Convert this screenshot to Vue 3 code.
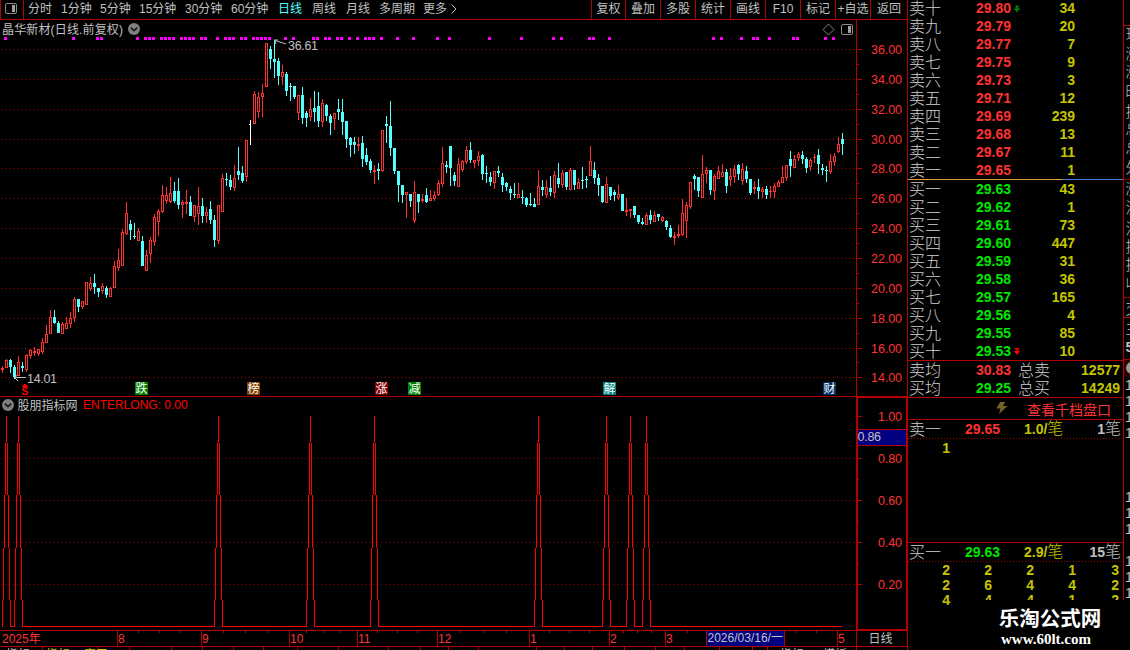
<template>
  <div class="terminal">
    <div class="main">
      <div class="toolbar">
        <div class="layout-btn">
          <svg width="14" height="13" viewBox="0 0 14 13">
            <rect x="1.5" y="1.5" width="11" height="10" rx="1.5" fill="none" stroke="#8c8c8c" />
            <rect x="8" y="3" width="3" height="7" fill="#a0a0a0" />
          </svg>
        </div>
        <div class="periods">
          <span v-for="p in periods" :key="p" :class="{ active: p === '日线' }">{{ p }}</span>
          <span class="more">更多<svg width="6" height="10" viewBox="0 0 6 10"><path d="M0.5 0.5L5 5L0.5 9.5" fill="none" stroke="#c0c0c0" /></svg></span>
        </div>
        <div class="tools">
          <span v-for="b in tools" :key="b">{{ b }}</span>
        </div>
      </div>

      <!-- K线主图 -->
      <svg class="panel" width="908" height="376" viewBox="0 20 908 376" shape-rendering="crispEdges">
        <path :d="gridPath(priceGrid)" class="dots" />
        <rect v-for="x in signals" :key="'m' + x" :x="x" y="37" width="3" height="3" fill="#ff00ff" />
        <g v-for="(c, i) in candles" :key="i" :fill="colors[c[0]]">
          <rect :x="2 + i * 4" :y="c[1]" width="1" :height="c[4] - c[1]" />
          <rect :x="1 + i * 4" :y="c[2]" :width="c[0] === 'w' ? 2 : 3" :height="c[3] - c[2]" />
          <rect v-if="c[0] === 'r' && c[3] - c[2] > 2" :x="2 + i * 4" :y="c[2] + 1" width="1" :height="c[3] - c[2] - 2" fill="#000" />
        </g>
        <rect x="856" y="20" width="1" height="376" class="frame" />
        <rect x="907" y="20" width="1" height="376" class="frame" />
        <g v-for="(y, i) in priceGrid" :key="y">
          <rect x="857" :y="y" width="5" height="1" class="frame" />
          <rect v-if="i < 11" x="857" :y="y + 15 - (i === 3 || i === 10 ? 1 : 0)" width="2" height="1" class="frame" />
          <text x="871" :y="y + 5" class="axis" textLength="31">{{ 36 - i * 2 }}.00</text>
        </g>
        <text x="2" y="34" class="label" textLength="121">晶华新材(日线.前复权)</text>
        <g shape-rendering="auto">
          <circle cx="134" cy="29" r="6" fill="#808080" />
          <path d="M130.8 27.7L134 30.7L137.2 27.7" fill="none" stroke="#141414" stroke-width="1.6" />
          <path d="M828.5 24L834 29.5L828.5 35L823 29.5Z" fill="none" stroke="#858585" />
          <rect x="841.5" y="24.5" width="11" height="10" rx="1.5" fill="none" stroke="#8c8c8c" />
          <rect x="848" y="26" width="3" height="7" fill="#a0a0a0" />
          <path d="M286 44L275 40.5M274 40H278M275 41L276 44" fill="none" stroke="#c0c0c0" />
          <path d="M26 377.5H14.5L18 381M14.5 377.5L17 375.5" fill="none" stroke="#c0c0c0" />
        </g>
        <text x="288" y="50" class="label num" textLength="30">36.61</text>
        <text x="27" y="383" class="label num" textLength="30">14.01</text>
        <path d="M25 384L28.5 387H21.5Z" fill="#ff0000" />
        <text x="21.5" y="395" class="mark">S</text>
        <g v-for="b in badges" :key="b.x">
          <path :d="`M${b.x} 382h12l1 1v12h-13z`" :fill="b.color" />
          <text :x="b.x + 0.5" y="393" class="badge">{{ b.text }}</text>
        </g>
      </svg>

      <!-- 副图指标 -->
      <svg class="panel" width="908" height="234" viewBox="0 396 908 234" shape-rendering="crispEdges">
        <rect x="0" y="396" width="908" height="1" class="frame" />
        <path :d="gridPath(subGrid)" class="dots" />
        <path :d="spikePath" fill="#ff0000" />
        <rect x="857" y="397" width="50" height="233" fill="none" stroke="#b40000" stroke-width="2" />
        <rect x="858" y="416" width="4" height="1" class="frame" />
        <g v-for="(y, i) in subGrid" :key="y">
          <rect x="858" :y="y" width="4" height="1" class="frame" />
          <rect v-if="i < 3" x="858" :y="y + 21" width="1" height="1" class="frame" />
        </g>
        <text v-for="(v, i) in ['1.00', '0.80', '0.60', '0.40', '0.20']" :key="v" x="878" :y="421 + i * 42" class="axis" textLength="24">{{ v }}</text>
        <rect x="858" y="429" width="48" height="17" class="frame" />
        <rect x="858" y="430" width="48" height="15" fill="#000080" />
        <text x="857.5" y="441" class="label num" textLength="23.5">0.86</text>
        <g shape-rendering="auto">
          <circle cx="8" cy="405" r="6" fill="#808080" />
          <path d="M4.8 403.7L8 406.7L11.2 403.7" fill="none" stroke="#141414" stroke-width="1.6" />
        </g>
        <text x="17.5" y="410" class="label">股朋指标网</text>
        <text x="83" y="409" class="enter">ENTERLONG: 0.00</text>
      </svg>

      <!-- 时间轴 -->
      <svg class="panel" width="908" height="20" viewBox="0 630 908 20" shape-rendering="crispEdges">
        <rect x="0" y="630" width="908" height="1" class="frame" />
        <rect x="0" y="646" width="908" height="1" class="frame" />
        <rect v-for="x in minorTicks" :key="'s' + x" :x="x" y="631" width="1" height="2" class="frame" />
        <rect v-for="x in majorTicks" :key="'l' + x" :x="x" y="631" width="1" height="15" class="frame" />
        <rect v-for="x in tabTicks" :key="'t' + x" :x="x" y="647" width="1" height="3" class="frame" />
        <rect x="907" y="630" width="1" height="20" class="frame" />
        <rect x="707" y="631" width="77" height="15" fill="#000080" />
        <text v-for="m in months" :key="m[0]" :x="m[0]" y="643" class="axis month">{{ m[1] }}</text>
        <text x="707.5" y="642" class="label date">2026/03/16/一</text>
        <text x="868.5" y="643" class="label">日线</text>
        <text x="6" y="659" class="label tab">指标</text>
        <text x="46" y="659" class="tab yellow">指标</text>
        <text x="84" y="659" class="tab yellow">窗口</text>
        <text x="780" y="659" class="label tab">指标</text>
        <text x="823" y="659" class="label tab">模板</text>
      </svg>
    </div>

    <div class="quote">
      <div class="book sell">
        <div v-for="r in asks" :key="r[0]" class="row">
          <span class="name">{{ r[0] }}</span>
          <span class="price up">{{ r[1] }}</span>
          <svg class="flag" width="6" height="7" viewBox="0 0 6 7"><path v-if="r[0] === '卖十'" d="M3 0L5.5 2.5H3.6V3.5H5.8V5H3.8V7H2.2V5H.2V3.5H2.4V2.5H.5Z" fill="#008c00" /></svg>
          <span class="vol">{{ r[2] }}</span>
        </div>
      </div>
      <div class="split"></div>
      <div class="book buy">
        <div v-for="r in bids" :key="r[0]" class="row">
          <span class="name">{{ r[0] }}</span>
          <span class="price down">{{ r[1] }}</span>
          <svg class="flag" width="6" height="7" viewBox="0 0 6 7"><path v-if="r[0] === '买十'" d="M.5 0H5.5V1.2H3.6V2.5H5.5V3.7L3 7L.5 3.7V2.5H2.4V1.2H.5Z" fill="#ff0000" /></svg>
          <span class="vol">{{ r[2] }}</span>
        </div>
      </div>
      <div class="sums">
        <div class="row">
          <span class="name">卖均</span><span class="price up">30.83</span><span class="name">总卖</span><span class="vol">12577</span>
        </div>
        <div class="row">
          <span class="name">买均</span><span class="price down">29.25</span><span class="name">总买</span><span class="vol">14249</span>
        </div>
      </div>
      <div class="depth-link">
        <svg width="12" height="12" viewBox="0 0 12 12"><path d="M4 0H9L7 4H11.5L3 12L4.5 6.5H0.5Z" fill="#74642a" /></svg>
        <span>查看千档盘口</span>
      </div>
      <div class="queue first">
        <div class="head">
          <span class="name">卖一</span><span class="price up">29.65</span><span class="avg">1.0/<i>笔</i></span><span class="count">1<i>笔</i></span>
        </div>
        <div class="orders"><span>1</span></div>
      </div>
      <div class="queue">
        <div class="head">
          <span class="name">买一</span><span class="price down">29.63</span><span class="avg">2.9/<i>笔</i></span><span class="count">15<i>笔</i></span>
        </div>
        <div class="orders">
          <span v-for="(n, i) in orders" :key="i">{{ n }}</span>
        </div>
      </div>
    </div>

    <svg class="side" width="7" height="600" viewBox="1123 0 7 600" shape-rendering="crispEdges">
      <rect x="1123" y="0" width="1" height="600" class="frame" />
      <rect v-for="y in [25, 179, 297, 317, 359]" :key="y" x="1124" :y="y" width="6" height="1" class="frame" />
      <rect x="1124" y="360" width="6" height="17" fill="#300000" />
      <circle cx="1132" cy="368" r="6" fill="#999" shape-rendering="auto" />
      <text v-for="s in sideText" :key="s[0]" x="1125.5" :y="s[0]" class="side-text">{{ s[1] }}</text>
      <text x="1125.5" y="352" class="side-bold">5</text>
      <text v-for="y in sideOnes" :key="'o' + y" x="1125" :y="y" class="side-num">1</text>
    </svg>

    <div class="watermark">
      <div class="site">乐淘公式网</div>
      <div class="url">www.60lt.com</div>
    </div>
  </div>
</template>

<script setup>
const periods = ['分时', '1分钟', '5分钟', '15分钟', '30分钟', '60分钟', '日线', '周线', '月线', '多周期']
const tools = ['复权', '叠加', '多股', '统计', '画线', 'F10', '标记', '+自选', '返回']

const colors = { r: '#ff3232', c: '#54ffff', w: '#ffffff' }

// [类型, 上影, 实体顶, 实体底, 下影]
const candles = [
  ['r', 366, 368, 370, 373], ['r', 359, 360, 368, 368], ['c', 359, 360, 367, 373], ['c', 365, 367, 377, 379],
  ['r', 356, 362, 376, 376], ['c', 362, 366, 368, 372], ['r', 354, 355, 370, 372], ['r', 349, 350, 356, 359],
  ['r', 347, 351, 353, 356], ['r', 349, 349, 354, 356], ['r', 338, 342, 352, 354], ['r', 325, 334, 343, 343],
  ['r', 310, 317, 334, 334], ['c', 310, 317, 323, 324], ['c', 321, 323, 333, 333], ['r', 322, 324, 334, 334],
  ['r', 317, 323, 329, 329], ['r', 312, 318, 324, 328], ['r', 297, 299, 318, 322], ['c', 299, 299, 307, 312],
  ['r', 301, 301, 307, 309], ['r', 282, 282, 305, 305], ['r', 277, 283, 289, 291], ['c', 274, 283, 287, 294],
  ['c', 288, 288, 292, 297], ['r', 283, 286, 291, 294], ['c', 286, 288, 295, 298], ['r', 287, 288, 297, 297],
  ['r', 261, 266, 288, 288], ['r', 249, 260, 268, 271], ['r', 229, 232, 266, 266], ['r', 202, 213, 234, 235],
  ['c', 220, 224, 230, 240], ['c', 223, 236, 237, 239], ['r', 228, 231, 241, 241], ['c', 236, 241, 266, 266],
  ['r', 250, 255, 271, 271], ['r', 237, 240, 254, 263], ['r', 214, 217, 242, 246], ['r', 209, 211, 222, 236],
  ['r', 185, 195, 212, 213], ['r', 187, 195, 201, 204], ['r', 177, 193, 202, 203], ['c', 182, 191, 201, 203],
  ['c', 178, 191, 205, 209], ['r', 200, 202, 205, 218], ['r', 190, 202, 204, 214], ['c', 196, 202, 216, 216],
  ['r', 205, 205, 217, 222], ['r', 187, 206, 214, 225], ['c', 198, 206, 216, 223], ['r', 207, 212, 216, 223],
  ['c', 201, 209, 220, 224], ['c', 215, 220, 240, 247], ['r', 205, 205, 241, 244], ['r', 174, 178, 212, 212],
  ['c', 173, 179, 180, 186], ['c', 175, 180, 187, 190], ['r', 165, 178, 188, 191], ['c', 147, 171, 175, 180],
  ['c', 166, 173, 181, 183], ['r', 140, 140, 177, 182], ['w', 120, 124, 125, 145], ['r', 91, 94, 124, 124],
  ['r', 92, 97, 112, 118], ['r', 84, 93, 97, 117], ['r', 43, 43, 87, 87], ['c', 46, 49, 59, 69],
  ['c', 40, 59, 62, 78], ['c', 58, 61, 76, 85], ['r', 65, 72, 77, 85], ['c', 72, 74, 91, 96],
  ['c', 83, 86, 87, 101], ['c', 86, 86, 97, 99], ['r', 95, 95, 113, 120], ['c', 87, 95, 118, 124],
  ['c', 111, 113, 118, 127], ['r', 98, 109, 117, 121], ['c', 91, 108, 112, 122], ['c', 92, 106, 121, 127],
  ['r', 99, 103, 122, 127], ['c', 104, 105, 116, 121], ['c', 114, 116, 123, 135], ['r', 113, 113, 119, 130],
  ['c', 99, 109, 112, 120], ['c', 99, 112, 122, 135], ['c', 121, 121, 139, 148], ['c', 137, 138, 145, 157],
  ['c', 137, 142, 145, 154], ['r', 137, 144, 146, 151], ['c', 136, 143, 159, 167], ['c', 148, 155, 162, 165],
  ['c', 159, 161, 170, 173], ['r', 165, 170, 172, 184], ['c', 163, 169, 171, 180], ['r', 130, 130, 171, 172],
  ['c', 116, 124, 126, 143], ['c', 101, 126, 148, 156], ['c', 148, 148, 171, 174], ['c', 171, 171, 185, 202],
  ['c', 185, 185, 195, 203], ['r', 192, 192, 195, 218], ['c', 194, 194, 201, 207], ['r', 181, 192, 221, 223],
  ['c', 194, 194, 202, 213], ['r', 194, 199, 201, 203], ['c', 188, 195, 202, 203], ['r', 190, 198, 201, 201],
  ['r', 191, 195, 199, 201], ['r', 180, 183, 195, 196], ['r', 147, 163, 184, 187], ['c', 161, 165, 167, 173],
  ['c', 146, 146, 168, 186], ['c', 172, 175, 181, 186], ['r', 158, 164, 187, 187], ['r', 160, 161, 170, 172],
  ['r', 146, 150, 162, 164], ['c', 142, 150, 160, 163], ['r', 160, 160, 163, 168], ['r', 151, 156, 161, 166],
  ['c', 154, 155, 174, 180], ['c', 166, 173, 174, 183], ['c', 172, 177, 182, 186], ['r', 171, 171, 183, 189],
  ['c', 166, 171, 173, 177], ['c', 173, 177, 185, 192], ['c', 182, 183, 187, 191], ['c', 186, 189, 193, 200],
  ['c', 183, 194, 195, 198], ['r', 183, 194, 198, 198], ['c', 190, 197, 198, 204], ['c', 197, 198, 205, 207],
  ['c', 193, 204, 205, 206], ['c', 198, 204, 207, 207], ['r', 170, 186, 205, 205], ['c', 180, 187, 190, 196],
  ['r', 180, 187, 195, 198], ['c', 176, 188, 192, 196], ['r', 171, 175, 193, 198], ['c', 163, 178, 184, 188],
  ['r', 170, 173, 185, 188], ['c', 172, 172, 187, 190], ['r', 168, 170, 190, 190], ['c', 170, 170, 185, 190],
  ['r', 178, 182, 189, 189], ['c', 167, 180, 181, 189], ['c', 176, 179, 180, 188], ['r', 146, 161, 176, 176],
  ['c', 162, 170, 178, 184], ['c', 174, 178, 185, 196], ['c', 186, 186, 202, 203], ['r', 177, 184, 203, 203],
  ['c', 187, 187, 196, 200], ['c', 190, 192, 195, 201], ['r', 185, 194, 198, 200], ['c', 194, 194, 211, 211],
  ['r', 198, 210, 212, 216], ['r', 209, 209, 211, 218], ['c', 206, 206, 215, 218], ['c', 215, 215, 222, 224],
  ['c', 218, 222, 224, 225], ['r', 213, 215, 225, 225], ['c', 210, 215, 220, 224], ['r', 211, 215, 222, 222],
  ['c', 214, 214, 217, 221], ['r', 216, 217, 221, 222], ['c', 220, 221, 227, 230], ['c', 225, 228, 237, 238],
  ['r', 232, 236, 238, 245], ['r', 225, 234, 236, 238], ['r', 199, 213, 235, 236], ['r', 202, 205, 221, 238],
  ['r', 182, 182, 207, 209], ['c', 174, 176, 179, 190], ['c', 177, 177, 191, 197], ['r', 155, 174, 198, 198],
  ['r', 167, 170, 174, 183], ['c', 170, 170, 190, 195], ['r', 174, 176, 191, 200], ['r', 166, 171, 179, 179],
  ['r', 164, 172, 177, 177], ['c', 169, 172, 186, 193], ['r', 168, 176, 180, 186], ['r', 165, 169, 177, 183],
  ['c', 164, 165, 174, 180], ['r', 163, 169, 181, 185], ['c', 166, 171, 179, 183], ['c', 179, 179, 193, 195],
  ['r', 181, 187, 189, 194], ['c', 179, 187, 191, 199], ['r', 187, 189, 192, 198], ['c', 186, 189, 195, 199],
  ['r', 186, 191, 192, 198], ['r', 183, 186, 192, 198], ['r', 180, 182, 187, 187], ['r', 166, 177, 183, 183],
  ['r', 165, 165, 178, 181], ['c', 151, 159, 166, 177], ['r', 155, 159, 168, 168], ['r', 152, 154, 158, 161],
  ['c', 151, 155, 159, 164], ['c', 157, 159, 168, 173], ['r', 158, 160, 167, 171], ['r', 154, 157, 158, 163],
  ['c', 149, 155, 164, 174], ['c', 164, 168, 170, 175], ['c', 166, 170, 171, 182], ['r', 154, 161, 172, 174],
  ['r', 153, 156, 162, 166], ['r', 137, 144, 152, 153], ['c', 133, 139, 144, 155]
]

const signals = [
  4, 72, 96, 100, 136, 144, 148, 152, 160, 164, 168, 172, 180, 184, 188, 192, 200, 204, 216, 224, 228, 232,
  240, 244, 252, 256, 260, 264, 268, 284, 292, 312, 316, 324, 328, 336, 340, 348, 356, 364, 368, 372, 380,
  396, 412, 436, 448, 488, 520, 552, 560, 588, 592, 608, 712, 720, 740, 752, 756, 768, 792, 796, 824, 832
]

const priceGrid = [49, 79, 109, 139, 168, 198, 228, 258, 288, 318, 348, 377]
const subGrid = [458, 500, 542, 584]

const gridPath = (rows) => rows.map((y) => `M1 ${y + 0.5}H856`).join('')

const badges = [
  { x: 135, text: '跌', color: '#008000' },
  { x: 247, text: '榜', color: '#804000' },
  { x: 375, text: '涨', color: '#800000' },
  { x: 408, text: '减', color: '#008000' },
  { x: 603, text: '解', color: '#008080' },
  { x: 823, text: '财', color: '#003366' }
]

const spikes = [6, 18, 218, 310, 374, 538, 606, 630, 646]
const steps = [416, 443, 495, 548, 600, 627]

const buildSpikes = () => {
  let d = ''
  spikes.forEach((c, n) => {
    for (let k = 0; k < 5; k++) {
      const h = steps[k + 1] - steps[k]
      d += `M${c - k} ${steps[k]}h1v${h}h-1z`
      if (k) d += `M${c + k} ${steps[k]}h1v${h}h-1z`
    }
    const end = n < spikes.length - 1 ? spikes[n + 1] - 4 : 842
    d += `M${c + 5} 626H${end}v1H${c + 5}z`
  })
  return d
}
const spikePath = buildSpikes()

const majorTicks = [117, 201, 289, 357, 437, 529, 609, 665, 706, 784, 837, 856]
const minorTicks = [138, 159, 180, 223, 245, 267, 306, 323, 340, 377, 397, 417, 460, 483, 506, 549, 569, 589, 623, 637, 651, 687, 795, 816]
const tabTicks = [42, 97, 129, 171, 202, 233, 263, 297, 338, 388, 420, 448, 478, 536, 564, 592, 624, 655, 684, 719, 752, 767, 856]
const months = [
  [2, '2025年'], [118, '8'], [202, '9'], [290, '10'], [358, '11'], [438, '12'],
  [530, '1'], [610, '2'], [666, '3'], [838, '5']
]

const asks = [
  ['卖十', '29.80', 34], ['卖九', '29.79', 20], ['卖八', '29.77', 7], ['卖七', '29.75', 9], ['卖六', '29.73', 3],
  ['卖五', '29.71', 12], ['卖四', '29.69', 239], ['卖三', '29.68', 13], ['卖二', '29.67', 11], ['卖一', '29.65', 1]
]
const bids = [
  ['买一', '29.63', 43], ['买二', '29.62', 1], ['买三', '29.61', 73], ['买四', '29.60', 447], ['买五', '29.59', 31],
  ['买六', '29.58', 36], ['买七', '29.57', 165], ['买八', '29.56', 4], ['买九', '29.55', 85], ['买十', '29.53', 10]
]
const orders = [2, 2, 2, 1, 3, 2, 6, 4, 4, 2, 4, 4, 4, 1, 2]

const sideText = [
  [40, '现'], [59, '涨'], [77, '涨'], [97, '昨'], [117, '换'], [134, '总'], [153, '总'], [173, '外'],
  [194, '涨'], [213, '流'], [234, '流'], [252, '换'], [270, '换'], [289, '收'], [314, '交'], [334, '主']
]
const sideOnes = [390, 406, 422, 438, 502, 518, 534, 566, 582, 598]
</script>

<style>
html,
body {
  background: #000;
  overflow: hidden;
}
</style>

<style scoped>
.terminal {
  position: relative;
  display: grid;
  grid-template-columns: 908px 215px 7px;
  width: 1130px;
  height: 650px;
  overflow: hidden;
  background: #000;
  color: #c0c0c0;
  font-family: "Liberation Sans", "Noto Sans CJK SC", sans-serif;
  font-size: 12px;
}

.main {
  display: flex;
  flex-direction: column;
}

.panel {
  display: block;
  flex: none;
}

.toolbar {
  display: flex;
  height: 20px;
  box-sizing: border-box;
  border-bottom: 1px solid #b40000;
  border-right: 1px solid #b40000;
  line-height: 19px;
  white-space: nowrap;
}

.layout-btn {
  width: 24px;
  box-sizing: border-box;
  border: solid #b40000;
  border-width: 0 1px;
  padding: 2px 0 0 3px;
}

.layout-btn svg {
  display: block;
}

.periods {
  display: grid;
  grid-template-columns: 33px 39px 39px 46px 46px 47px 34px 34px 33px 44px 1fr;
  width: 567px;
  box-sizing: border-box;
  padding-left: 4px;
}

.active {
  color: #54ffff;
}

.more svg {
  margin-left: 4px;
  vertical-align: -1px;
}

.tools {
  display: grid;
  grid-template-columns: 34px repeat(7, 35px) 1fr;
  flex: 1;
  text-align: center;
}

.tools span {
  border-left: 1px solid #b40000;
}

.frame {
  fill: #b40000;
}

.dots {
  fill: none;
  stroke: #a00000;
  stroke-dasharray: 1 3;
}

.label {
  fill: #c0c0c0;
  font-size: 12px;
}

.num {
  font-size: 12.5px;
}

.axis {
  fill: #ff3232;
  font-size: 12.5px;
}

.month {
  font-size: 12px;
}

.enter {
  fill: #ff0000;
  font-size: 12px;
}

.mark {
  fill: #ff0000;
  font-size: 10px;
  font-weight: 700;
}

.badge {
  fill: #fff;
  font-size: 12px;
}

.tab {
  font-size: 12px;
}

.yellow {
  fill: #c4c400;
}

.quote {
  display: flex;
  flex-direction: column;
  height: 650px;
  overflow: hidden;
  font-size: 14px;
}

.sell {
  height: 179px;
}

.split {
  flex: none;
  height: 1px;
  background: linear-gradient(to right, #e0a040 154px, #4682d2 154px);
}

.buy {
  height: 180px;
}

.sell .row:first-child {
  margin-top: -1px;
}

.book .row {
  display: grid;
  grid-template-columns: 67px 38px 6px 55px;
  align-items: center;
  height: 18px;
  padding-left: 1px;
}

.name {
  color: #d0d0d0;
  font-size: 16px;
  font-weight: 300;
  line-height: 17px;
}

.price {
  font-weight: 700;
}

.up {
  color: #ff3232;
}

.down {
  color: #00e600;
}

.vol {
  color: #c4c400;
  font-weight: 700;
  text-align: right;
}

.flag {
  display: block;
}

.sums {
  height: 36px;
  border-top: 1px solid #b40000;
}

.sums .row {
  display: grid;
  grid-template-columns: 67px 42px 36px 66px;
  align-items: center;
  height: 18px;
  padding-left: 1px;
}

.depth-link {
  display: flex;
  align-items: center;
  height: 21px;
  padding: 0 12px 0 88px;
  justify-content: space-between;
  border-top: 1px solid #b40000;
  color: #ff3232;
}

.depth-link svg {
  margin-top: -2px;
}

.queue {
  border-top: 1px solid #b40000;
}

.queue.first {
  height: 122px;
}

.head {
  display: grid;
  grid-template-columns: 56px 59px 50px 1fr;
  align-items: center;
  height: 18px;
  padding: 0 2px 1px 1px;
  background: repeating-linear-gradient(to right, #a00000 0 1px, transparent 1px 3px) left bottom / 100% 1px no-repeat;
}

.head i {
  font-style: normal;
  font-weight: 300;
  font-size: 16px;
  line-height: 16px;
}

.avg {
  color: #c4c400;
  font-weight: 700;
}

.count {
  font-weight: 700;
  text-align: right;
}

.orders {
  display: grid;
  grid-template-columns: 42px 42px 42px 42px 43px;
  grid-auto-rows: 15px;
  padding-top: 1px;
  line-height: 15px;
  color: #c4c400;
  font-weight: 700;
  text-align: right;
}

.first .orders {
  padding-top: 2px;
}

.side-text {
  fill: #c0c0c0;
  font-size: 15px;
  font-weight: 300;
}

.side-bold {
  fill: #c0c0c0;
  font-size: 14px;
  font-weight: 700;
}

.side-num {
  fill: #c0c0c0;
  font-size: 14px;
}

.watermark {
  position: absolute;
  left: 970px;
  top: 600px;
  width: 160px;
  height: 50px;
  background: #000;
  color: #fff;
  text-align: center;
  padding-top: 6px;
  box-sizing: border-box;
}

.site {
  font-size: 20.5px;
  font-weight: 700;
  line-height: 26px;
}

.url {
  margin: -1px 8px 0 0;
  font: 700 15px/16px "Liberation Serif", serif;
}
</style>
